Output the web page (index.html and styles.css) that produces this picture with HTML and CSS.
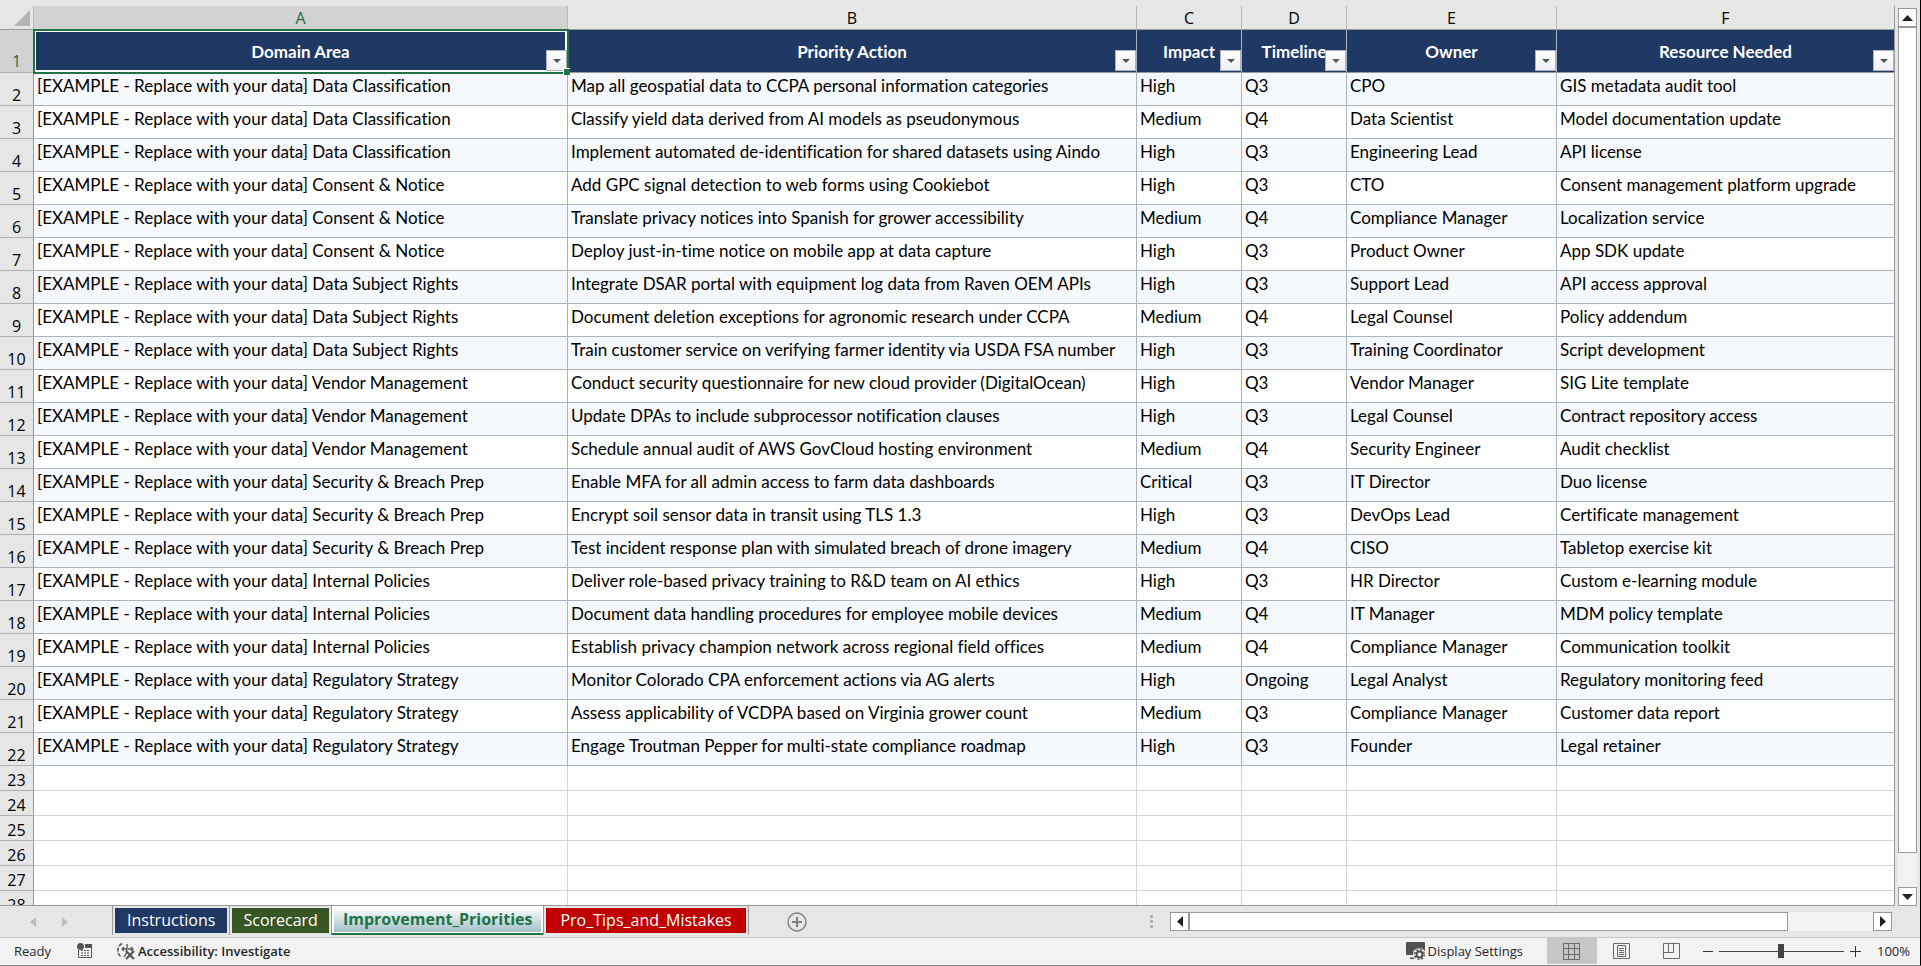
FILE: index.html
```html
<!DOCTYPE html>
<html lang="en">
<head>
    <meta charset="UTF-8">
    <meta name="viewport" content="width=device-width, initial-scale=1.0">
    <title>Improvement_Priorities</title>
    <link rel="stylesheet" href="styles.css">
</head>
<body>
    <div class="app">
        <div class="workspace">
            <div class="sheet">
                <table class="grid">
                    <colgroup>
                        <col class="col-num">
                        <col class="col-a">
                        <col class="col-b">
                        <col class="col-c">
                        <col class="col-d">
                        <col class="col-e">
                        <col class="col-f">
                    </colgroup>
                    <thead>
                        <tr class="letters">
                            <th><svg class="corner" width="16" height="16" viewBox="0 0 16 16"><path d="M16 0v16H0z" fill="#b4b4b4"/></svg></th>
                            <th class="selected">A</th>
                            <th>B</th>
                            <th>C</th>
                            <th>D</th>
                            <th>E</th>
                            <th>F</th>
                        </tr>
                    </thead>
                    <tbody id="rows"></tbody>
                </table>
            </div>
            <div class="vscroll">
                <button class="scroll-btn" aria-label="Scroll up"><svg width="11" height="6" viewBox="0 0 11 6"><path d="M5.5 0L11 6H0z" fill="#222"/></svg></button>
                <div class="vthumb"></div>
                <div class="track"></div>
                <button class="scroll-btn" aria-label="Scroll down"><svg width="11" height="6" viewBox="0 0 11 6"><path d="M0 0h11L5.5 6z" fill="#222"/></svg></button>
            </div>
        </div>

        <div class="tabbar">
            <div class="tab-nav">
                <button aria-label="Previous sheet"><svg width="6" height="10" viewBox="0 0 6 10"><path d="M6 0v10L0 5z" fill="#bdbdbd"/></svg></button>
                <button aria-label="Next sheet"><svg width="6" height="10" viewBox="0 0 6 10"><path d="M0 0v10l6-5z" fill="#bdbdbd"/></svg></button>
            </div>
            <div class="tabs">
                <button class="tab navy"><span>Instructions</span></button>
                <button class="tab green"><span>Scorecard</span></button>
                <button class="tab active"><span>Improvement_Priorities</span></button>
                <button class="tab red"><span>Pro_Tips_and_Mistakes</span></button>
            </div>
            <button class="add-sheet" aria-label="New sheet">
                <svg width="20" height="20" viewBox="0 0 20 20" fill="none" stroke="#808080"><circle cx="10" cy="10" r="9" stroke-width="1.4"/><path d="M10 5v10M5 10h10" stroke-width="2"/></svg>
            </button>
            <div class="hscroll">
                <svg class="grip" width="3" height="13" viewBox="0 0 3 13" fill="#b0b0b0"><path d="M0 0h3v3H0zM0 5h3v3H0zM0 10h3v3H0z"/></svg>
                <button class="scroll-btn" aria-label="Scroll left"><svg width="6" height="11" viewBox="0 0 6 11"><path d="M6 0v11L0 5.5z" fill="#222"/></svg></button>
                <div class="hthumb"></div>
                <div class="track"></div>
                <button class="scroll-btn" aria-label="Scroll right"><svg width="6" height="11" viewBox="0 0 6 11"><path d="M0 0v11l6-5.5z" fill="#222"/></svg></button>
            </div>
        </div>

        <div class="status">
            <span class="ready">Ready</span>
            <button class="macro" aria-label="Record macro">
                <svg width="16" height="16" viewBox="0 0 16 16"><path d="M1.500 7v7.500h13V4" fill="none" stroke="#555"/><path d="M8 1h7v4H8z" fill="#555"/><circle cx="3.500" cy="3.500" r="3.500" fill="#555"/><path d="M4 7.500h2M7 7.500h2M10 7.500h2M4 10h2M7 10h2M10 10h2M4 12.500h2M7 12.500h2M10 12.500h2" stroke="#555"/></svg>
            </button>
            <button class="access">
                <svg width="20" height="18" viewBox="0 0 20 18" fill="none" stroke="#555"><path d="M6 1.500a8 8 0 0 0 0 14" stroke-width="1.500" stroke-dasharray="4 1.500"/><path d="M6 7h5M12 7h5M11 2v5" stroke-width="1.300"/><path d="M8 5L6 7l2 2M15 5l2 2-2 2M11 7l-1 5-2 3" stroke-width="1.300"/><path d="M10 9l8 8M18 9l-8 8" stroke-width="2.200"/></svg>
                Accessibility: Investigate
            </button>
            <button class="display">
                <svg width="20" height="18" viewBox="0 0 20 18"><path d="M1 0h17a1 1 0 0 1 1 1v8l-3-2.500h-5L7.500 9l-.5 4H1a1 1 0 0 1-1-1V1a1 1 0 0 1 1-1zM4 15.500h4V17H4z" fill="#505050"/><circle cx="13.500" cy="12.500" r="3" fill="none" stroke="#505050" stroke-width="2"/><circle cx="13.500" cy="12.500" r="4.800" fill="none" stroke="#505050" stroke-width="1.500" stroke-dasharray="2 1.770"/></svg>
                Display Settings
            </button>
            <div class="views">
                <button class="current" aria-label="Normal"><svg width="17" height="17" viewBox="0 0 17 17" fill="none" stroke="#6a6a6a"><path d="M.5.5h16v16H.5zM5.500 0v17M11.500 0v17M0 5.500h17M0 11.500h17"/></svg></button>
                <button aria-label="Page Layout"><svg width="17" height="16" viewBox="0 0 17 16" fill="none" stroke="#6a6a6a"><path d="M.5.5h16v15H.5zM4.500 2.500h8v11h-8zM6 5.500h5M6 7.500h5M6 9.500h5M6 11.500h5"/></svg></button>
                <button aria-label="Page Break Preview"><svg width="17" height="16" viewBox="0 0 17 16" fill="none" stroke="#6a6a6a"><path d="M.5.5h16v15H.5zM.5 9.500h10v-9M5.500.5v9"/></svg></button>
            </div>
            <div class="zoom">
                <button aria-label="Zoom out"><svg width="10" height="11" viewBox="0 0 10 11" stroke="#333"><path d="M0 5.500h10"/></svg></button>
                <input type="range" min="0" max="200" value="100" aria-label="Zoom">
                <button aria-label="Zoom in"><svg width="11" height="11" viewBox="0 0 11 11" stroke="#333"><path d="M0 5.500h11M5.500 0v11"/></svg></button>
                <span class="percent">100%</span>
            </div>
        </div>
    </div>

    <script>
        const headers = ['Domain Area', 'Priority Action', 'Impact', 'Timeline', 'Owner', 'Resource Needed'];
        const prefix = '[EXAMPLE - Replace with your data] ';
        const data = [
            ['Data Classification', 'Map all geospatial data to CCPA personal information categories', 'High', 'Q3', 'CPO', 'GIS metadata audit tool'],
            ['Data Classification', 'Classify yield data derived from AI models as pseudonymous', 'Medium', 'Q4', 'Data Scientist', 'Model documentation update'],
            ['Data Classification', 'Implement automated de-identification for shared datasets using Aindo', 'High', 'Q3', 'Engineering Lead', 'API license'],
            ['Consent & Notice', 'Add GPC signal detection to web forms using Cookiebot', 'High', 'Q3', 'CTO', 'Consent management platform upgrade'],
            ['Consent & Notice', 'Translate privacy notices into Spanish for grower accessibility', 'Medium', 'Q4', 'Compliance Manager', 'Localization service'],
            ['Consent & Notice', 'Deploy just-in-time notice on mobile app at data capture', 'High', 'Q3', 'Product Owner', 'App SDK update'],
            ['Data Subject Rights', 'Integrate DSAR portal with equipment log data from Raven OEM APIs', 'High', 'Q3', 'Support Lead', 'API access approval'],
            ['Data Subject Rights', 'Document deletion exceptions for agronomic research under CCPA', 'Medium', 'Q4', 'Legal Counsel', 'Policy addendum'],
            ['Data Subject Rights', 'Train customer service on verifying farmer identity via USDA FSA number', 'High', 'Q3', 'Training Coordinator', 'Script development'],
            ['Vendor Management', 'Conduct security questionnaire for new cloud provider (DigitalOcean)', 'High', 'Q3', 'Vendor Manager', 'SIG Lite template'],
            ['Vendor Management', 'Update DPAs to include subprocessor notification clauses', 'High', 'Q3', 'Legal Counsel', 'Contract repository access'],
            ['Vendor Management', 'Schedule annual audit of AWS GovCloud hosting environment', 'Medium', 'Q4', 'Security Engineer', 'Audit checklist'],
            ['Security & Breach Prep', 'Enable MFA for all admin access to farm data dashboards', 'Critical', 'Q3', 'IT Director', 'Duo license'],
            ['Security & Breach Prep', 'Encrypt soil sensor data in transit using TLS 1.3', 'High', 'Q3', 'DevOps Lead', 'Certificate management'],
            ['Security & Breach Prep', 'Test incident response plan with simulated breach of drone imagery', 'Medium', 'Q4', 'CISO', 'Tabletop exercise kit'],
            ['Internal Policies', 'Deliver role-based privacy training to R&D team on AI ethics', 'High', 'Q3', 'HR Director', 'Custom e-learning module'],
            ['Internal Policies', 'Document data handling procedures for employee mobile devices', 'Medium', 'Q4', 'IT Manager', 'MDM policy template'],
            ['Internal Policies', 'Establish privacy champion network across regional field offices', 'Medium', 'Q4', 'Compliance Manager', 'Communication toolkit'],
            ['Regulatory Strategy', 'Monitor Colorado CPA enforcement actions via AG alerts', 'High', 'Ongoing', 'Legal Analyst', 'Regulatory monitoring feed'],
            ['Regulatory Strategy', 'Assess applicability of VCDPA based on Virginia grower count', 'Medium', 'Q3', 'Compliance Manager', 'Customer data report'],
            ['Regulatory Strategy', 'Engage Troutman Pepper for multi-state compliance roadmap', 'High', 'Q3', 'Founder', 'Legal retainer']
        ];

        function addRow(number, cells, className) {
            const tr = document.createElement('tr');
            tr.className = className;
            const th = document.createElement('th');
            th.textContent = number;
            tr.appendChild(th);
            cells.forEach(text => {
                const td = document.createElement('td');
                td.textContent = text;
                tr.appendChild(td);
            });
            document.getElementById('rows').appendChild(tr);
            return tr;
        }

        // Header row with filter buttons
        const titleRow = addRow(1, headers, 'titles');
        titleRow.querySelectorAll('td').forEach((td, i) => {
            const btn = document.createElement('button');
            btn.className = 'filter';
            btn.setAttribute('aria-label', 'Filter ' + headers[i]);
            td.appendChild(btn);
        });

        data.forEach((row, i) => addRow(i + 2, [prefix + row[0], ...row.slice(1)], 'data'));

        // Empty rows below the data
        for (let n = 23; n <= 28; n++) {
            addRow(n, ['', '', '', '', '', ''], 'empty');
        }
    </script>
</body>
</html>
```
FILE: styles.css
```css
* {
    box-sizing: border-box;
}
body {
    margin: 0;
    font-family: "Open Sans", "Noto Sans", sans-serif;
    color: #262626;
    background-color: #e6e6e6;
}
button {
    display: flex;
    align-items: center;
    justify-content: center;
    padding: 0;
    border: none;
    background: none;
    color: inherit;
    font: inherit;
}
svg {
    display: block;
    flex: none;
}
.app {
    display: flex;
    flex-direction: column;
    height: 100vh;
    border-right: 1px solid #000;
    border-bottom: 1px solid #8a8a8a;
}
.workspace {
    display: flex;
    flex: 1;
    min-height: 0;
    padding-right: 3px;
}

/* Grid */
.sheet {
    flex: 1;
    min-width: 0;
    margin-top: 6px;
    overflow: hidden;
    border-right: 1px solid #999;
    border-bottom: 1px solid #999;
}
.grid {
    width: 100%;
    table-layout: fixed;
    border-collapse: separate;
    border-spacing: 0;
    font-family: Lato, sans-serif;
    font-size: 17px;
    font-variant-ligatures: none;
    line-height: 20px;
    color: #000;
}
.col-num { width: 34px; }
.col-a { width: 534px; }
.col-b { width: 569px; }
.col-c, .col-d { width: 105px; }
.col-e { width: 210px; }
.grid th {
    padding: 0;
    font-family: "Open Sans", sans-serif;
    font-size: 16px;
    font-weight: normal;
    background-color: #e6e6e6;
    border-right: 1px solid #999;
    border-bottom: 1px solid #b0b0b0;
}
.letters th {
    height: 24px;
    border-right-color: #b8b8b8;
    border-bottom-color: #999;
}
.letters th:last-child {
    border-right: none;
}
.letters .selected {
    color: #1e6b45;
    background-color: #d2d2d2;
}
.corner {
    margin-left: 14px;
}
.grid tbody th {
    vertical-align: bottom;
}
.grid td {
    padding: 3px;
    vertical-align: top;
    white-space: nowrap;
    overflow: hidden;
    background-color: #fff;
    border-right: 1px solid #abb3c0;
    border-bottom: 1px solid #abb3c0;
}
.grid td:last-child {
    border-right: none;
}
.grid .titles td {
    position: relative;
    height: 43px;
    padding-top: 12px;
    font-weight: bold;
    text-align: center;
    color: #fff;
    background-color: #203864;
    border-bottom-color: #999;
}
.titles th {
    padding-bottom: 1px;
}
.grid .titles th {
    color: #1e6b45;
    background-color: #d2d2d2;
}
/* Selected cell and its fill handle */
.titles td:nth-child(2) {
    z-index: 1;
    overflow: visible;
    outline: 2px solid #217346;
    outline-offset: -1px;
    box-shadow: inset 0 0 0 2px #fff;
}
.titles td:nth-child(2)::after {
    content: "";
    position: absolute;
    right: -3px;
    bottom: -3px;
    width: 6px;
    height: 6px;
    background-color: #217346;
    border: 1px solid #fff;
    border-width: 1px 0 0 1px;
}
.filter {
    position: absolute;
    right: 0;
    bottom: 1px;
    width: 21px;
    height: 21px;
    border: 1px solid #abb3c0;
    background: linear-gradient(#fff, #eef0f5);
}
.filter::after {
    content: "";
    border: 4px solid transparent;
    border-top-color: #555;
    border-bottom: none;
}
.data th, .data td {
    height: 33px;
}
.data:nth-child(even) td {
    background-color: #f5f8fd;
}
.empty th, .empty td {
    height: 25px;
}
.empty td {
    padding: 0;
    border-color: #d4d4d4;
}

/* Scrollbars */
.vscroll {
    display: flex;
    flex-direction: column;
    width: 19px;
    margin: 8px 0 0 3px;
}
.scroll-btn {
    flex: none;
    width: 19px;
    height: 19px;
    border: 1px solid #999;
    background-color: #fff;
}
.track {
    flex: 1;
    background-color: #f2f2f2;
}
.vthumb {
    flex: 24;
    border: 1px solid #999;
    background-color: #fff;
}
.hthumb {
    flex: 7;
    border: 1px solid #999;
    background-color: #fff;
}

/* Sheet tabs */
.tabbar {
    display: flex;
    align-items: center;
    height: 32px;
    border-bottom: 1px solid #c6c6c6;
}
.tab-nav {
    display: flex;
    gap: 26px;
    width: 112px;
    padding-left: 30px;
}
.tabs {
    display: flex;
    align-self: stretch;
    font-size: 16px;
}
.tab {
    height: 29px;
    padding: 2px;
    border-left: 1px solid #999;
}
.tab span {
    padding: 0 11px;
    line-height: 25px;
}
.tab.navy span {
    padding: 0 12px;
    background-color: #203864;
    color: #fff;
}
.green span {
    background-color: #375623;
    color: #fff;
}
.tab.red {
    border-right: 1px solid #999;
}
.tab.red span {
    padding: 0 14px;
    background-color: #c00000;
    color: #fff;
}
.tab.active {
    color: #217346;
    font-weight: bold;
    background-color: #fff;
    border-bottom: 2px solid #217346;
}
.tab.active span {
    padding: 0 9px;
    background: linear-gradient(#fff, #a3c1c6);
}
.add-sheet {
    margin-left: 38px;
}
.hscroll {
    display: flex;
    align-items: stretch;
    width: 742px;
    height: 19px;
    margin: 0 28px 0 auto;
}
.grip {
    align-self: center;
    margin-right: 17px;
}

/* Status bar */
.status {
    display: flex;
    align-items: center;
    height: 27px;
    padding: 0 10px 1px 14px;
    font-size: 13px;
    background-color: #f2f2f2;
}
.macro {
    margin-left: 26px;
}
.access {
    gap: 2px;
    margin-left: 23px;
    font-weight: 600;
}
.display {
    gap: 1px;
    margin-left: auto;
}
.views {
    display: flex;
    align-self: stretch;
    margin-left: 24px;
}
.views button {
    width: 50px;
}
.views .current {
    background-color: #c6c6c6;
}
.zoom {
    display: flex;
    align-items: center;
    gap: 6px;
    margin-left: 6px;
}
.zoom input {
    width: 125px;
    height: 15px;
    margin: 0;
    appearance: none;
    background: linear-gradient(#444, #444) center / 100% 1px no-repeat;
}
.zoom input::-webkit-slider-thumb {
    appearance: none;
    width: 6px;
    height: 14px;
    background-color: #444;
}
.percent {
    margin-left: 10px;
}
```
